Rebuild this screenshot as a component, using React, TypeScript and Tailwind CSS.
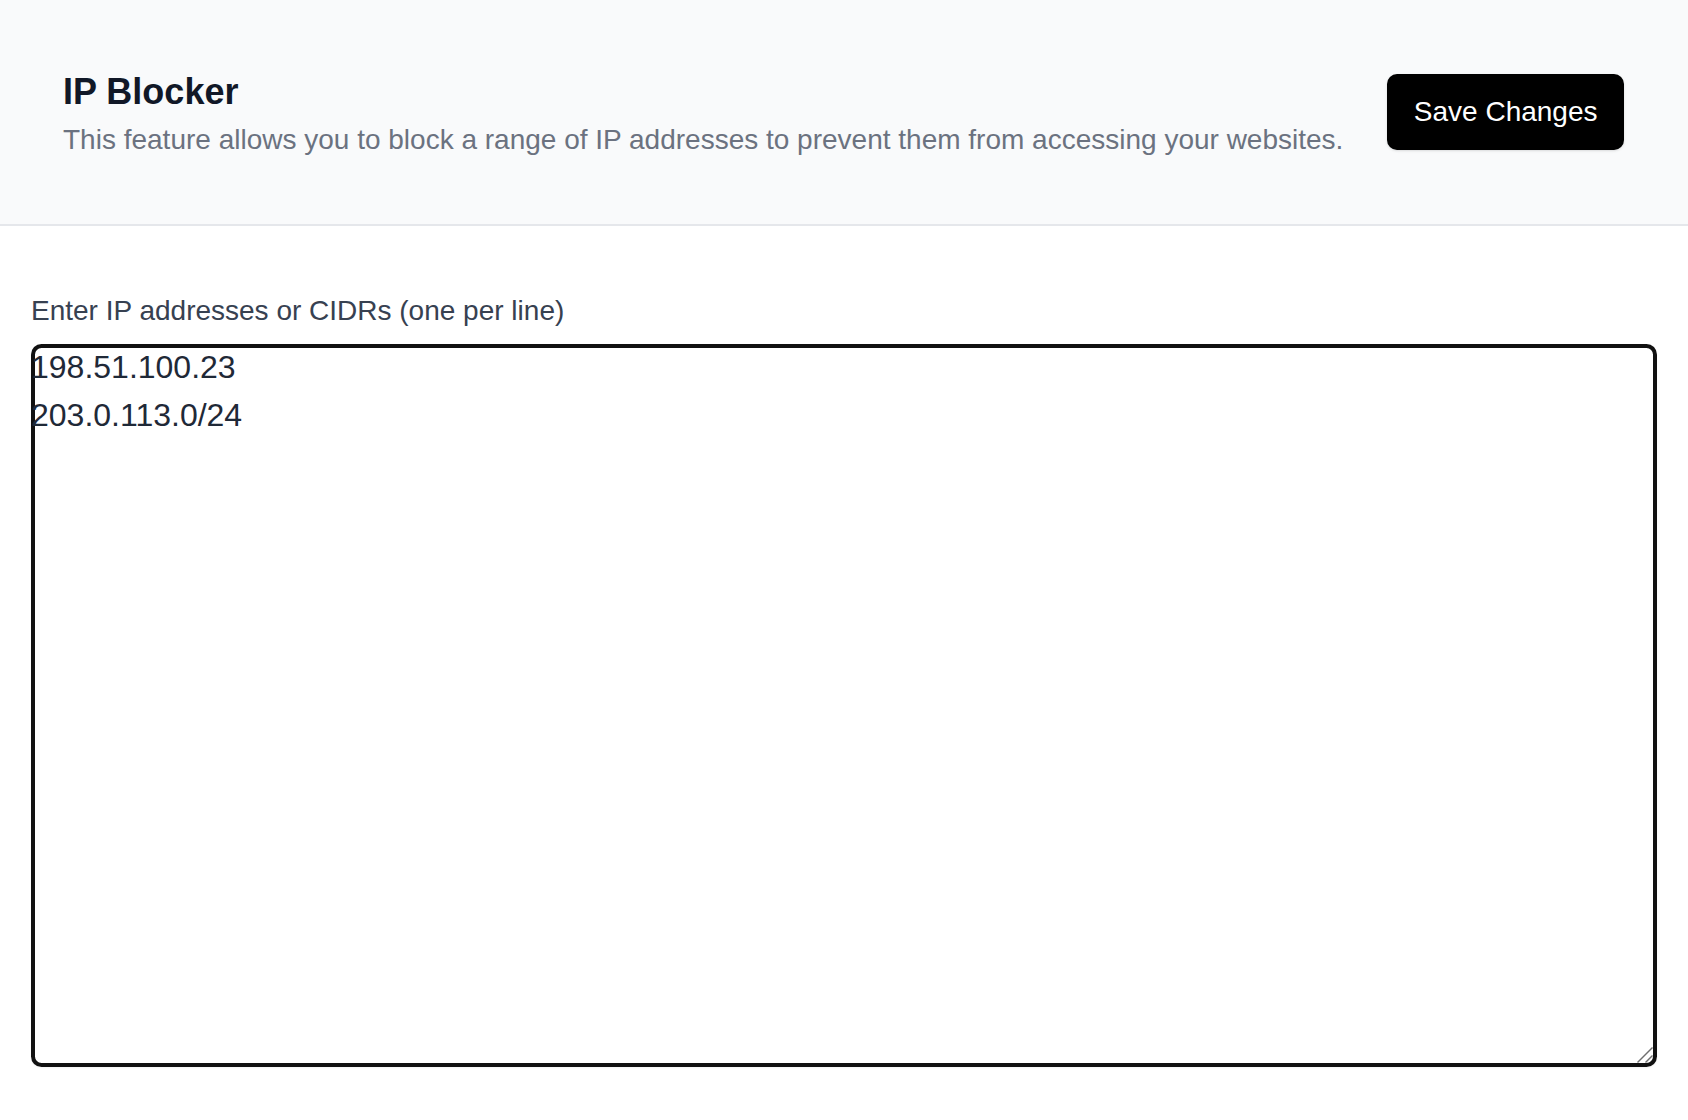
import React from "react";

export default function App() {
  const initialValue = "198.51.100.23\n203.0.113.0/24";

  return (
    <div className="min-h-screen w-full bg-white font-['Liberation_Sans',Arial,sans-serif]">
      {/* Header */}
      <header className="flex items-center justify-between border-b-2 border-[#e5e7eb] bg-[#f9fafb] pl-[63px] pr-[64px] pt-[67px] pb-[63px]">
        <div className="flex flex-col">
          <h1 className="text-[36px] font-bold leading-[50px] text-[#111827]">
            IP Blocker
          </h1>
          <p className="mt-[2px] text-[28px] leading-[42px] text-[#6b7280]">
            This feature allows you to block a range of IP addresses to prevent
            them from accessing your websites.
          </p>
        </div>
        <button className="mb-[4px] h-[76px] rounded-[10px] bg-black px-[26.5px] text-[28px] leading-[42px] text-white shadow-sm">
          Save Changes
        </button>
      </header>

      {/* Body */}
      <main className="px-[31px] pt-[64px]">
        <label
          htmlFor="ip-list"
          className="block text-[28px] leading-[42px] text-[#374151]"
        >
          Enter IP addresses or CIDRs (one per line)
        </label>
        <div className="relative mt-[12px]">
          <textarea
            id="ip-list"
            defaultValue={initialValue}
            className="block h-[723px] w-full resize-none rounded-[10.5px] border-0 bg-white p-0 text-[32px] leading-[47.5px] text-[#1f2937] shadow-[inset_0_0_0_4px_#111111,0_1px_2px_rgba(0,0,0,0.05)] outline-none"
          />
          {/* resize grip */}
          <svg
            className="pointer-events-none absolute bottom-[4px] right-[4px] h-[16px] w-[16px]"
            viewBox="0 0 16 16"
          >
            <line x1="0.5" y1="15.5" x2="15.5" y2="0.5" stroke="#6f6f6f" strokeWidth="1.4" />
            <line x1="8.5" y1="15.5" x2="15.5" y2="8.5" stroke="#6f6f6f" strokeWidth="1.4" />
          </svg>
        </div>
      </main>
    </div>
  );
}
